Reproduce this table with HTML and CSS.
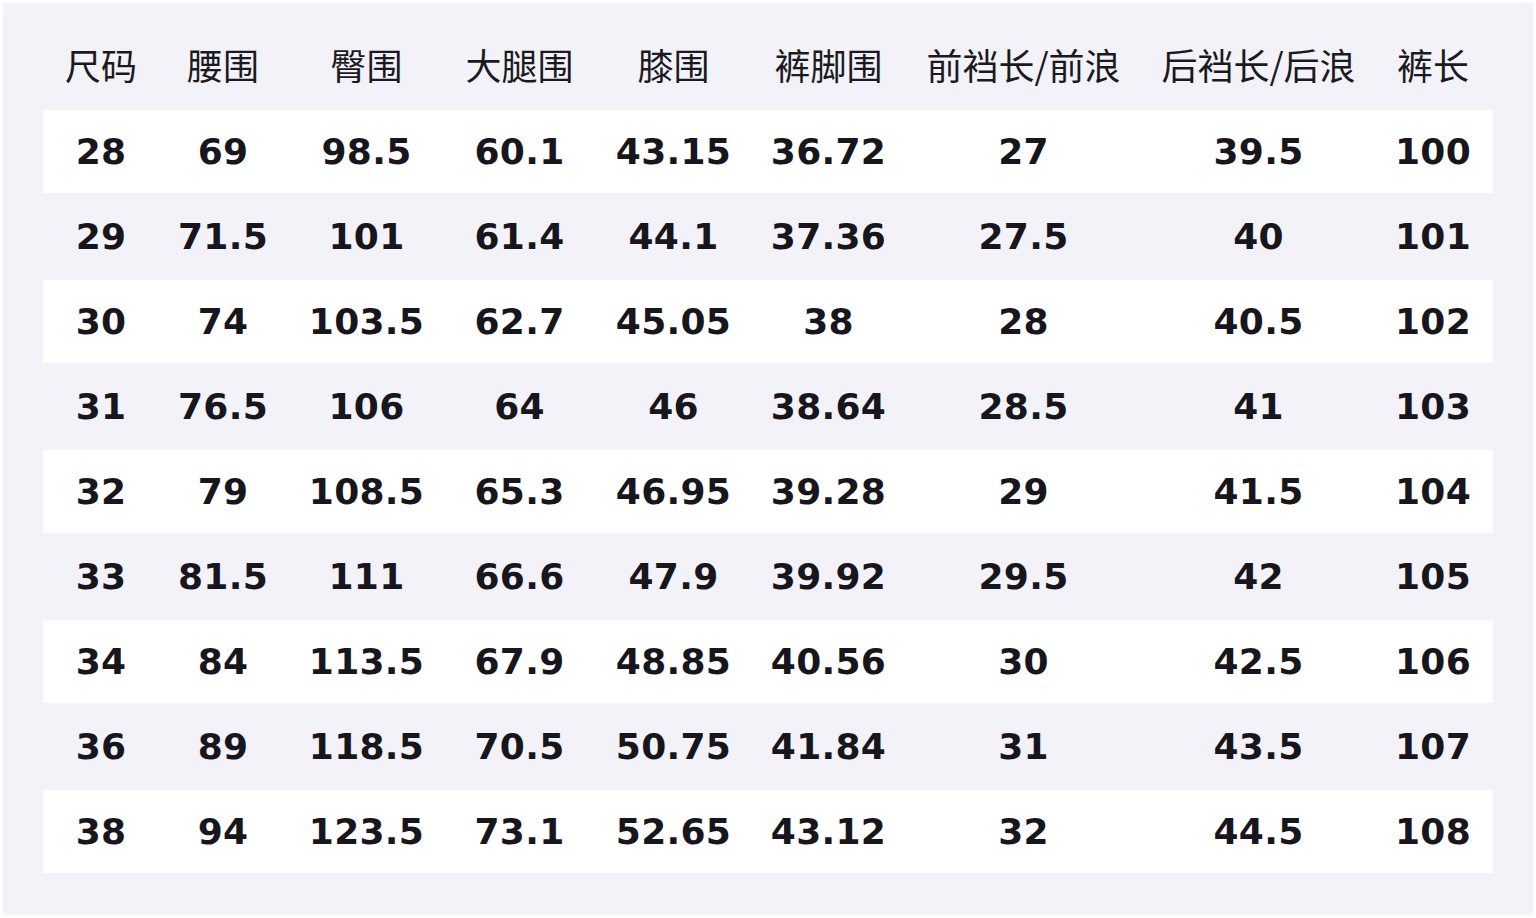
FILE: index.html
```html
<!DOCTYPE html>
<html lang="zh-CN">
<head>
<meta charset="utf-8">
<title>尺码表</title>
<link rel="stylesheet" href="styles.css">
</head>
<body>
<div class="panel">
  <table class="size-table">
    <colgroup>
      <col class="c1"><col class="c2"><col class="c3"><col class="c4"><col class="c5"><col class="c6"><col class="c7"><col class="c8"><col class="c9">
    </colgroup>
    <thead>
      <tr><th>尺码</th><th>腰围</th><th>臀围</th><th>大腿围</th><th>膝围</th><th>裤脚围</th><th>前裆长/前浪</th><th>后裆长/后浪</th><th>裤长</th></tr>
    </thead>
    <tbody>
      <tr class="odd"><td>28</td><td>69</td><td>98.5</td><td>60.1</td><td>43.15</td><td>36.72</td><td>27</td><td>39.5</td><td>100</td></tr>
      <tr><td>29</td><td>71.5</td><td>101</td><td>61.4</td><td>44.1</td><td>37.36</td><td>27.5</td><td>40</td><td>101</td></tr>
      <tr class="odd"><td>30</td><td>74</td><td>103.5</td><td>62.7</td><td>45.05</td><td>38</td><td>28</td><td>40.5</td><td>102</td></tr>
      <tr><td>31</td><td>76.5</td><td>106</td><td>64</td><td>46</td><td>38.64</td><td>28.5</td><td>41</td><td>103</td></tr>
      <tr class="odd"><td>32</td><td>79</td><td>108.5</td><td>65.3</td><td>46.95</td><td>39.28</td><td>29</td><td>41.5</td><td>104</td></tr>
      <tr><td>33</td><td>81.5</td><td>111</td><td>66.6</td><td>47.9</td><td>39.92</td><td>29.5</td><td>42</td><td>105</td></tr>
      <tr class="odd"><td>34</td><td>84</td><td>113.5</td><td>67.9</td><td>48.85</td><td>40.56</td><td>30</td><td>42.5</td><td>106</td></tr>
      <tr><td>36</td><td>89</td><td>118.5</td><td>70.5</td><td>50.75</td><td>41.84</td><td>31</td><td>43.5</td><td>107</td></tr>
      <tr class="odd"><td>38</td><td>94</td><td>123.5</td><td>73.1</td><td>52.65</td><td>43.12</td><td>32</td><td>44.5</td><td>108</td></tr>
    </tbody>
  </table>
</div>
</body>
</html>
```
FILE: styles.css
```css
html, body {
  margin: 0;
  padding: 0;
  background: #ffffff;
}

.panel {
  margin: 3px;
  padding: 22px 40px 40px;
  background: #f3f2f8;
}

.size-table {
  width: 100%;
  table-layout: fixed;
  border-collapse: collapse;
  border-spacing: 0;
  color: #16161c;
}

.c1 { width: 116px; }
.c2 { width: 128px; }
.c3 { width: 159px; }
.c4 { width: 147px; }
.c5 { width: 161px; }
.c6 { width: 149px; }
.c7 { width: 241px; }
.c8 { width: 229px; }
.c9 { width: 120px; }

.size-table th,
.size-table td {
  height: 83px;
  padding: 0;
  text-align: center;
  vertical-align: middle;
  white-space: nowrap;
  border-bottom: 2px solid #f3f2f8;
  background-clip: padding-box;
}

.size-table th {
  height: 77px;
  padding-bottom: 6px;
  font-family: "Noto Sans CJK SC", "Noto Sans", sans-serif;
  font-size: 36px;
  font-weight: 400;
  line-height: 1;
  color: #1a1a20;
}

.size-table td {
  font-family: "DejaVu Sans", sans-serif;
  font-size: 36px;
  font-weight: 700;
  line-height: 1;
  letter-spacing: 0.3px;
}

.size-table tr.odd td {
  background-color: #ffffff;
}
```
